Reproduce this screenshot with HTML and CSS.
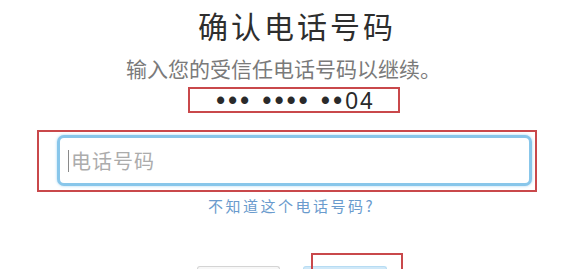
FILE: index.html
```html
<!DOCTYPE html>
<html lang="zh-CN">
<head>
<meta charset="utf-8">
<title>确认电话号码</title>
<link rel="stylesheet" href="styles.css">
</head>
<body>
<div class="page">
  <h1 class="title">确认电话号码</h1>
  <p class="subtitle">输入您的受信任电话号码以继续。</p>
  <div class="masked"><span class="dots">••• •••• ••</span>04</div>
  <div class="field-frame">
    <div class="field">
      <span class="caret"></span>
      <span class="placeholder">电话号码</span>
    </div>
  </div>
  <a class="link" href="#">不知道这个电话号码?</a>
  <div class="buttons">
    <span class="btn btn-cancel"></span>
    <span class="btn btn-next"></span>
    <span class="highlight"></span>
  </div>
</div>
</body>
</html>
```
FILE: styles.css
```css
html, body {
  margin: 0;
  padding: 0;
  background: #ffffff;
  overflow: hidden;
}
.page {
  width: 563px;
  height: 269px;
  overflow: hidden;
  display: flex;
  flex-direction: column;
  font-family: "Noto Sans CJK SC", "Noto Sans", sans-serif;
}
.title {
  margin: 9px 0 0 0;
  padding-left: 31px;
  text-align: center;
  font-size: 30px;
  line-height: 32px;
  font-weight: 400;
  letter-spacing: 3px;
  color: #2e2e2e;
}
.subtitle {
  margin: 15px 0 0 0;
  padding-left: 4px;
  text-align: center;
  font-size: 21px;
  line-height: 24px;
  color: #7a7a7a;
}
.masked {
  margin: 7px 0 0 188px;
  width: 205px;
  height: 22px;
  border: 2px solid #c9484b;
  text-align: center;
  font-family: "Liberation Sans", "DejaVu Sans", sans-serif;
  font-size: 23px;
  font-weight: 400;
  line-height: 22px;
  letter-spacing: 2px;
  padding-left: 3px;
  box-sizing: content-box;
  color: #2a2a2a;
}
.dots {
  font-size: 25px;
  font-weight: 700;
  letter-spacing: 3.3px;
}
.field-frame {
  margin: 17px 0 0 37px;
  border: 2px solid #c9484b;
  padding: 3px 3px 0 18px;
  box-sizing: border-box;
  width: 500px;
  height: 62px;
}
.field {
  width: 475px;
  height: 51px;
  box-sizing: border-box;
  border: 3px solid #88c6ea;
  border-radius: 7px;
  box-shadow: 0 0 3px #a9d6f2;
  background: #ffffff;
  display: flex;
  align-items: center;
  padding-left: 8px;
}
.caret {
  width: 1px;
  height: 22px;
  background: #8a8a8a;
  margin-right: 2px;
}
.placeholder {
  font-size: 20px;
  line-height: 24px;
  letter-spacing: 1px;
  color: #acacac;
}
.link {
  display: block;
  margin: 5px 0 0 0;
  padding-left: 20px;
  text-align: center;
  font-size: 15px;
  line-height: 18px;
  letter-spacing: 2.5px;
  color: #6a9bcd;
  text-decoration: none;
}
.buttons {
  position: relative;
  display: flex;
  gap: 23px;
  margin: 51px 0 0 197px;
}
.btn {
  display: block;
  width: 83px;
  height: 3px;
  box-sizing: border-box;
  border-radius: 5px 5px 0 0;
}
.btn-cancel {
  border: 1px solid #d4d4d4;
  border-bottom: none;
  background: #f7f7f7;
}
.btn-next {
  width: 84px;
  border: 1px solid #b7dcf3;
  border-bottom: none;
  background: #cfe8f8;
}
.highlight {
  position: absolute;
  left: 114px;
  top: -13px;
  width: 92px;
  height: 18px;
  border: 2px solid #c9484b;
  border-bottom: none;
  box-sizing: border-box;
}
```
